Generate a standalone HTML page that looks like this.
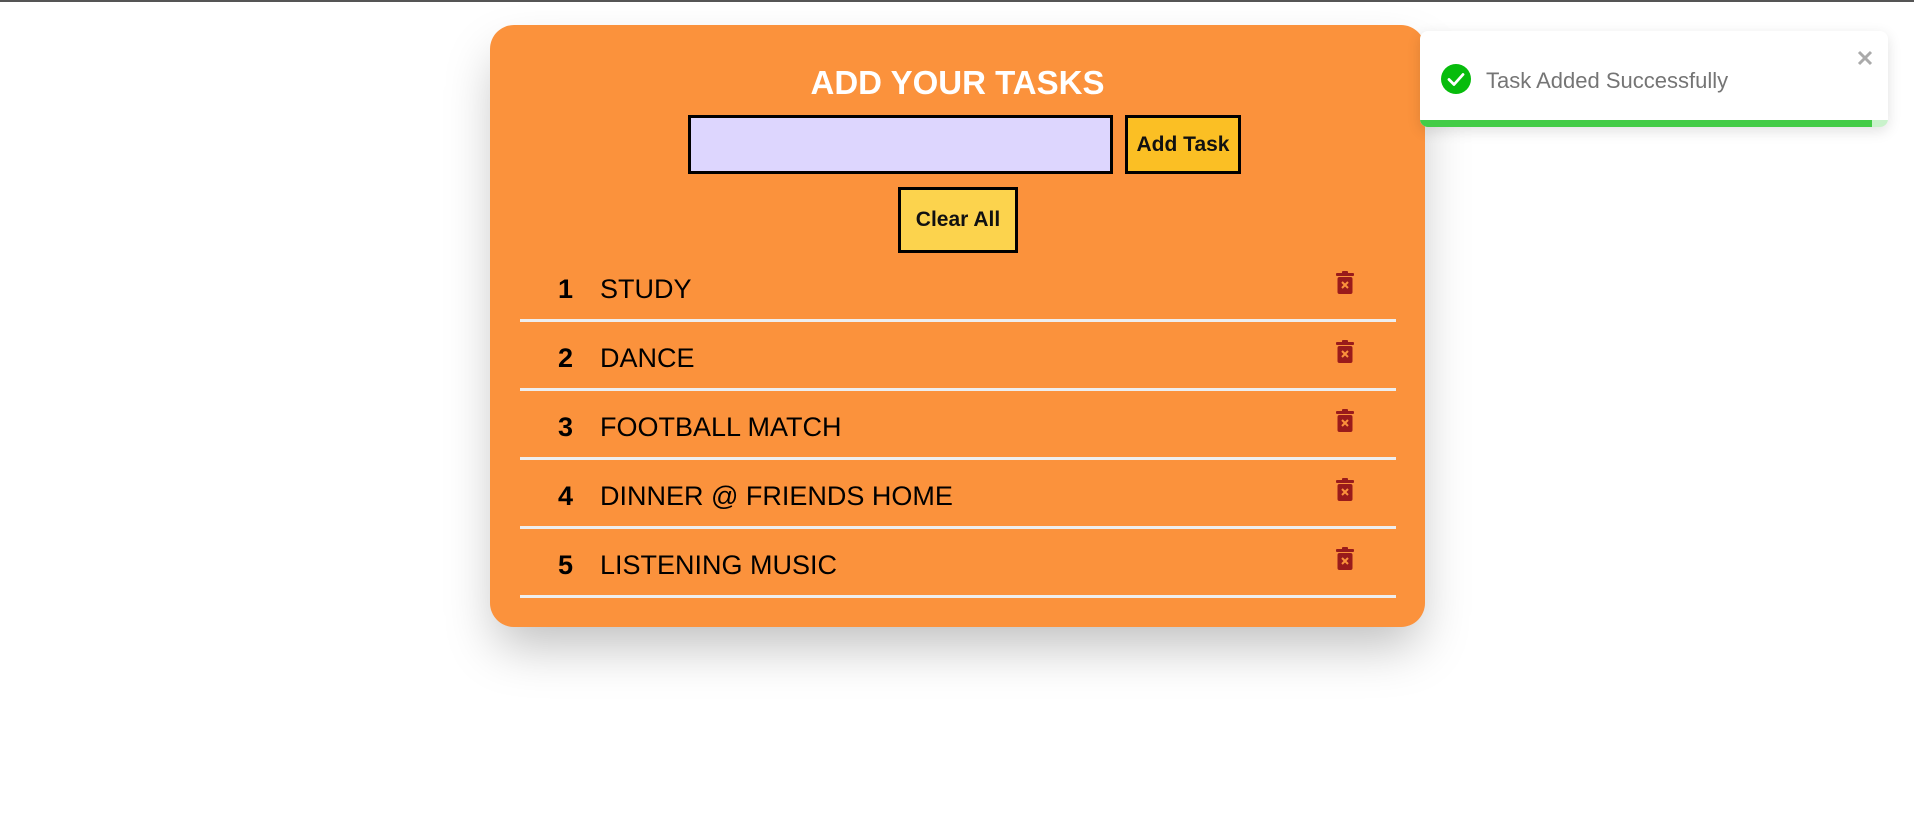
<!DOCTYPE html>
<html><head><meta charset="utf-8"><style>
html,body{margin:0;padding:0;background:#fff;width:1914px;height:829px;overflow:hidden;font-family:"Liberation Sans",sans-serif}
.topline{position:absolute;left:0;top:0;width:1914px;height:2px;background:#555}
.card{position:absolute;left:490px;top:25px;width:935px;height:602px;background:#fb923c;border-radius:24px;box-shadow:0 25px 50px -6px rgba(0,0,0,0.25)}
.title{position:absolute;left:490px;top:63px;width:935px;text-align:center;color:#fff;font-weight:bold;font-size:33px;line-height:40px}
.input{position:absolute;left:688px;top:115px;width:419px;height:53px;background:#ddd6fe;border:3px solid #000}
.btn{position:absolute;border:3px solid #000;font-size:21px;font-weight:600;color:#111;display:flex;align-items:center;justify-content:center;box-sizing:border-box}
.row{position:absolute;left:520px;width:876px;height:69px}
.line{position:absolute;left:520px;width:876px;height:3px;background:#eee}
.num{position:absolute;left:38px;font-weight:bold;font-size:27px;top:23px}
.txt{position:absolute;left:80px;font-size:27px;top:23px;color:#000}
.trash{position:absolute;left:816px}
.toast{position:absolute;left:1420px;top:31px;width:468px;height:96px;background:#fff;border-radius:8px;box-shadow:0 4px 14px rgba(0,0,0,0.12);overflow:hidden}
</style></head><body>
<div class="topline"></div>
<div class="card"></div>
<div class="title">ADD YOUR TASKS</div>
<div class="input"></div>
<div class="btn" style="left:1125px;top:115px;width:116px;height:59px;background:#fbbf24">Add Task</div>
<div class="btn" style="left:898px;top:187px;width:120px;height:66px;background:#fcd34d">Clear All</div>

<div class="row" style="top:251px"><span class="num">1</span><span class="txt">STUDY</span><svg class="trash" style="top:20px" width="18" height="23" viewBox="0 0 18 23"><rect x="6" y="0" width="6" height="3" rx="1" fill="#991b1b"/><rect x="0" y="2" width="18" height="3" rx="1" fill="#991b1b"/><rect x="1.5" y="6" width="15" height="17" rx="2" fill="#991b1b"/><path d="M6 11l6 6M12 11l-6 6" stroke="#fb923c" stroke-width="2"/></svg></div>
<div class="line" style="top:319px"></div>
<div class="row" style="top:320px"><span class="num">2</span><span class="txt">DANCE</span><svg class="trash" style="top:20px" width="18" height="23" viewBox="0 0 18 23"><rect x="6" y="0" width="6" height="3" rx="1" fill="#991b1b"/><rect x="0" y="2" width="18" height="3" rx="1" fill="#991b1b"/><rect x="1.5" y="6" width="15" height="17" rx="2" fill="#991b1b"/><path d="M6 11l6 6M12 11l-6 6" stroke="#fb923c" stroke-width="2"/></svg></div>
<div class="line" style="top:388px"></div>
<div class="row" style="top:389px"><span class="num">3</span><span class="txt">FOOTBALL MATCH</span><svg class="trash" style="top:20px" width="18" height="23" viewBox="0 0 18 23"><rect x="6" y="0" width="6" height="3" rx="1" fill="#991b1b"/><rect x="0" y="2" width="18" height="3" rx="1" fill="#991b1b"/><rect x="1.5" y="6" width="15" height="17" rx="2" fill="#991b1b"/><path d="M6 11l6 6M12 11l-6 6" stroke="#fb923c" stroke-width="2"/></svg></div>
<div class="line" style="top:457px"></div>
<div class="row" style="top:458px"><span class="num">4</span><span class="txt">DINNER @ FRIENDS HOME</span><svg class="trash" style="top:20px" width="18" height="23" viewBox="0 0 18 23"><rect x="6" y="0" width="6" height="3" rx="1" fill="#991b1b"/><rect x="0" y="2" width="18" height="3" rx="1" fill="#991b1b"/><rect x="1.5" y="6" width="15" height="17" rx="2" fill="#991b1b"/><path d="M6 11l6 6M12 11l-6 6" stroke="#fb923c" stroke-width="2"/></svg></div>
<div class="line" style="top:526px"></div>
<div class="row" style="top:527px"><span class="num">5</span><span class="txt">LISTENING MUSIC</span><svg class="trash" style="top:20px" width="18" height="23" viewBox="0 0 18 23"><rect x="6" y="0" width="6" height="3" rx="1" fill="#991b1b"/><rect x="0" y="2" width="18" height="3" rx="1" fill="#991b1b"/><rect x="1.5" y="6" width="15" height="17" rx="2" fill="#991b1b"/><path d="M6 11l6 6M12 11l-6 6" stroke="#fb923c" stroke-width="2"/></svg></div>
<div class="line" style="top:595px"></div>

<div class="toast">
<svg style="position:absolute;left:21px;top:33px" width="30" height="30" viewBox="0 0 30 30"><circle cx="15" cy="15" r="15" fill="#07bc0c"/><path d="M8 15.5l5 5 9-10" stroke="#fff" stroke-width="2.8" fill="none" stroke-linecap="round" stroke-linejoin="round"/></svg>
<div style="position:absolute;left:66px;top:37px;font-size:22px;color:#757575;line-height:26px">Task Added Successfully</div>
<svg style="position:absolute;left:437px;top:19px" width="16" height="16" viewBox="0 0 16 16"><path d="M2 2l12 12M14 2L2 14" stroke="#aaa" stroke-width="3"/></svg>
<div style="position:absolute;left:0;top:89px;width:468px;height:7px;background:#c9f2cb"></div>
<div style="position:absolute;left:0;top:89px;width:452px;height:7px;background:#43cc47"></div>
</div>
</body></html>
